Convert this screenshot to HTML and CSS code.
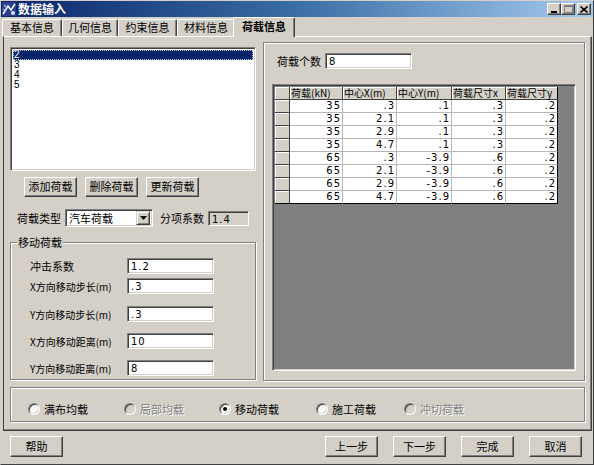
FILE: index.html
```html
<!DOCTYPE html>
<html lang="zh">
<head>
<meta charset="utf-8">
<title>数据输入</title>
<link rel="stylesheet" href="styles.css">
</head>
<body>
<div class="window">
  <div class="titlebar">
    <svg class="appicon" width="14" height="14" viewBox="0 0 14 14">
      <rect x="0" y="0" width="14" height="14" fill="#2a3f8f"/>
      <path d="M1 12 L6 4 L9 8 L13 2" stroke="#ffffff" stroke-width="1.5" fill="none"/>
      <path d="M2 3 L5 6 M1 7 L4 9" stroke="#9fc3ff" stroke-width="1.2"/>
      <circle cx="11" cy="11" r="2" fill="#d6e4ff"/>
    </svg>
    <span class="title">数据输入</span>
    <div class="tbtns">
      <span class="tbtn"><svg width="8" height="7" viewBox="0 0 8 7"><rect x="1" y="5" width="6" height="2" fill="#000"/></svg></span>
      <span class="tbtn"><svg width="9" height="8" viewBox="0 0 9 8"><rect x="0.5" y="0.5" width="8" height="7" fill="none" stroke="#808080"/><rect x="0" y="0" width="9" height="2" fill="#808080"/></svg></span>
      <span class="tbtn close"><svg width="8" height="7" viewBox="0 0 8 7"><path d="M0.5 0.5 L7.5 6.5 M7.5 0.5 L0.5 6.5" stroke="#000" stroke-width="1.6"/></svg></span>
    </div>
  </div>

  <div class="tabs">
    <div class="tab t1">基本信息</div>
    <div class="tab t2">几何信息</div>
    <div class="tab t3">约束信息</div>
    <div class="tab t4">材料信息</div>
    <div class="tab active">荷载信息</div>
  </div>

  <div class="panel">
    <div class="top">
      <div class="left">
        <div class="listbox">
          <div class="item sel">2</div>
          <div class="item">3</div>
          <div class="item">4</div>
          <div class="item">5</div>
        </div>
        <div class="btnrow">
          <div class="btn">添加荷载</div>
          <div class="btn">删除荷载</div>
          <div class="btn">更新荷载</div>
        </div>
        <div class="typerow">
          <span class="lbl-type">荷载类型</span>
          <div class="combo">
            <span class="combo-text">汽车荷载</span>
            <span class="dropbtn"><svg width="7" height="4" viewBox="0 0 7 4"><path d="M0 0 H7 L3.5 4 Z" fill="#000"/></svg></span>
          </div>
          <span class="lbl-coef">分项系数</span>
          <div class="field disabled coef">1.4</div>
        </div>
        <div class="gbox move">
          <span class="glegend">移动荷载</span>
          <div class="frow r1"><span class="flbl">冲击系数</span><div class="field fin">1.2</div></div>
          <div class="frow r2"><span class="flbl small">X方向移动步长(m)</span><div class="field fin">.3</div></div>
          <div class="frow r3"><span class="flbl small">Y方向移动步长(m)</span><div class="field fin">.3</div></div>
          <div class="frow r4"><span class="flbl small">X方向移动距离(m)</span><div class="field fin">10</div></div>
          <div class="frow r5"><span class="flbl small">Y方向移动距离(m)</span><div class="field fin">8</div></div>
        </div>
      </div>

      <div class="gbox right">
        <div class="countrow">
          <span class="lbl-count">荷载个数</span>
          <div class="field count">8</div>
        </div>
        <div class="grid">
          <table>
            <colgroup>
              <col class="c0"><col class="c1"><col class="c2"><col class="c3"><col class="c4"><col class="c5">
            </colgroup>
            <thead>
              <tr><th class="fix"></th><th>荷载(kN)</th><th>中心X(m)</th><th>中心Y(m)</th><th>荷载尺寸x</th><th class="lastc">荷载尺寸y</th></tr>
            </thead>
            <tbody>
              <tr><th class="fix"></th><td>35</td><td>.3</td><td>.1</td><td>.3</td><td class="lastc">.2</td></tr>
              <tr><th class="fix"></th><td>35</td><td>2.1</td><td>.1</td><td>.3</td><td class="lastc">.2</td></tr>
              <tr><th class="fix"></th><td>35</td><td>2.9</td><td>.1</td><td>.3</td><td class="lastc">.2</td></tr>
              <tr><th class="fix"></th><td>35</td><td>4.7</td><td>.1</td><td>.3</td><td class="lastc">.2</td></tr>
              <tr><th class="fix"></th><td>65</td><td>.3</td><td>-3.9</td><td>.6</td><td class="lastc">.2</td></tr>
              <tr><th class="fix"></th><td>65</td><td>2.1</td><td>-3.9</td><td>.6</td><td class="lastc">.2</td></tr>
              <tr><th class="fix"></th><td>65</td><td>2.9</td><td>-3.9</td><td>.6</td><td class="lastc">.2</td></tr>
              <tr class="lastr"><th class="fix"></th><td>65</td><td>4.7</td><td>-3.9</td><td>.6</td><td class="lastc">.2</td></tr>
            </tbody>
          </table>
        </div>
      </div>
    </div>

    <div class="gbox radios">
      <div class="ropt w1"><span class="radio"></span><span class="rtext">满布均载</span></div>
      <div class="ropt w2 dis"><span class="radio"></span><span class="rtext">局部均载</span></div>
      <div class="ropt w3"><span class="radio"><span class="dot"></span></span><span class="rtext">移动荷载</span></div>
      <div class="ropt w4"><span class="radio"></span><span class="rtext">施工荷载</span></div>
      <div class="ropt w5 dis"><span class="radio"></span><span class="rtext">冲切荷载</span></div>
    </div>
  </div>

  <div class="footer">
    <div class="btn fbtn">帮助</div>
    <div class="fright">
      <div class="btn fbtn">上一步</div>
      <div class="btn fbtn">下一步</div>
      <div class="btn fbtn">完成</div>
      <div class="btn fbtn">取消</div>
    </div>
  </div>
</div>
</body>
</html>
```

FILE: styles.css
```css
* { box-sizing: border-box; }

body {
  margin: 0;
  background: #d4d0c8;
  font-family: "Noto Sans CJK SC", "Liberation Sans", sans-serif;
  font-size: 11px;
  color: #000;
}

.window {
  width: 594px;
  height: 465px;
  background: #d4d0c8;
  border: 1px solid;
  border-color: #d4d0c8 #404040 #404040 #d4d0c8;
  display: flex;
  flex-direction: column;
  overflow: hidden;
}

/* title bar */
.titlebar {
  height: 16px;
  flex: none;
  display: flex;
  align-items: center;
  padding-left: 1px;
  background: linear-gradient(to right, #0a246a 0%, #3a6ea5 50%, #a6caf0 100%);
}
.appicon { flex: none; }
.title {
  margin-left: 2px;
  color: #fff;
  font-weight: bold;
  font-size: 12px;
  line-height: 14px;
}
.tbtns {
  margin-left: auto;
  display: flex;
  padding-right: 2px;
}
.tbtn {
  width: 14px;
  height: 12px;
  background: #d4d0c8;
  border: 1px solid;
  border-color: #fff #404040 #404040 #fff;
  box-shadow: inset -1px -1px #808080;
  display: flex;
  align-items: center;
  justify-content: center;
}
.tbtn.close { margin-left: 2px; }

/* tabs */
.tabs {
  height: 19px;
  flex: none;
  display: flex;
  align-items: flex-end;
  padding-left: 1px;
  position: relative;
  z-index: 1;
}
.tab {
  height: 17px;
  border: 1px solid;
  border-bottom: none;
  border-color: #fff #404040 transparent #fff;
  box-shadow: inset -1px 0 #808080;
  border-radius: 2px 2px 0 0;
  text-align: center;
  line-height: 15px;
  background: #d4d0c8;
}
.t1 { width: 60px; }
.t2 { width: 56px; }
.t3 { width: 59px; }
.t4 { width: 58px; }
.tab.active {
  width: 62px;
  height: 20px;
  margin-left: -2px;
  margin-bottom: -1px;
  font-weight: bold;
  line-height: 17px;
}

/* main panel */
.panel {
  height: 395px;
  flex: none;
  margin: 0 1px 0 2px;
  border: 1px solid;
  border-color: #fff #404040 #404040 #404040;
  box-shadow: inset -1px -1px #808080;
  padding: 5px 6px 0 6px;
  display: flex;
  flex-direction: column;
}
.top {
  display: flex;
  gap: 7px;
  height: 339px;
}
.left {
  width: 246px;
  flex: none;
  display: flex;
  flex-direction: column;
}

/* sunken elements */
.listbox, .field, .combo, .grid {
  border: 1px solid;
  border-color: #808080 #fff #fff #808080;
  box-shadow: inset 1px 1px #404040, inset -1px -1px #d4d0c8;
  background: #fff;
}

.listbox {
  margin-top: 5px;
  height: 124px;
  padding: 2px;
  font-family: "Liberation Sans", sans-serif;
  font-size: 10px;
}
.item {
  height: 10px;
  line-height: 10px;
  padding-left: 1px;
  overflow: hidden;
}
.item.sel {
  background: #0a246a;
  color: #fff;
  outline: 1px dotted #c8c8c8;
  outline-offset: -1px;
}

/* buttons */
.btn {
  width: 53px;
  height: 20px;
  border: 1px solid;
  border-color: #fff #404040 #404040 #fff;
  box-shadow: inset -1px -1px #808080;
  background: #d4d0c8;
  text-align: center;
  line-height: 17px;
}
.btnrow {
  margin-top: 6px;
  padding-left: 14px;
  display: flex;
  gap: 8px;
}

/* load type row */
.typerow {
  margin-top: 12px;
  height: 18px;
  display: flex;
  align-items: center;
}
.lbl-type {
  width: 55px;
  padding-left: 7px;
  flex: none;
}
.combo {
  width: 88px;
  height: 18px;
  flex: none;
  display: flex;
  align-items: center;
  padding: 2px;
}
.combo-text { padding-left: 1px; line-height: 13px; }
.dropbtn {
  margin-left: auto;
  width: 14px;
  height: 14px;
  background: #d4d0c8;
  border: 1px solid;
  border-color: #d4d0c8 #404040 #404040 #d4d0c8;
  box-shadow: inset 1px 1px #fff, inset -1px -1px #808080;
  display: flex;
  align-items: center;
  justify-content: center;
}
.lbl-coef {
  width: 48px;
  margin-left: 7px;
  flex: none;
}
.field {
  height: 16px;
  padding: 0 3px;
  line-height: 15px;
  letter-spacing: 1px;
  font-family: "DejaVu Sans", sans-serif;
  font-size: 10px;
}
.field.disabled { background: #d4d0c8; }
.coef { width: 41px; height: 15px; }

/* group boxes */
.gbox {
  position: relative;
  border: 1px solid #808080;
  box-shadow: inset 1px 1px #fff, 1px 1px #fff;
}
.glegend {
  position: absolute;
  top: -7px;
  left: 6px;
  padding: 0 1px;
  background: #d4d0c8;
  line-height: 12px;
}
.move {
  margin-top: 15px;
  height: 138px;
  padding: 15px 0 0 19px;
}
.frow {
  display: flex;
  align-items: center;
  height: 16px;
}
.r2 { margin-top: 4px; }
.r3 { margin-top: 12px; }
.r4 { margin-top: 11px; }
.r5 { margin-top: 11px; }
.flbl { width: 97px; flex: none; }
.flbl.small { font-size: 10px; }
.fin { width: 87px; }

/* right group */
.right {
  flex: 1;
  padding: 10px 0 0 8px;
}
.countrow {
  display: flex;
  align-items: center;
  height: 16px;
  padding-left: 5px;
}
.lbl-count { width: 48px; flex: none; }
.count { width: 87px; }

.grid {
  margin-top: 15px;
  width: 304px;
  height: 287px;
  background: #808080;
  padding: 2px 0 0 2px;
  overflow: hidden;
}
.grid table {
  border-collapse: separate;
  border-spacing: 0;
  table-layout: fixed;
  width: 283px;
}
.c0 { width: 15px; }
.c1 { width: 53px; }
.c2 { width: 54px; }
.c3 { width: 55px; }
.c4 { width: 54px; }
.c5 { width: 52px; }
.grid th, .grid td {
  height: 13px;
  padding: 0 1px;
  line-height: 12px;
  white-space: nowrap;
}
.grid th {
  background: #d4d0c8;
  font-weight: normal;
  text-align: left;
  font-size: 10px;
  border-right: 1px solid #404040;
  border-bottom: 1px solid #404040;
  box-shadow: inset 1px 1px #fff;
}
.grid td {
  background: #fff;
  text-align: right;
  font-family: "DejaVu Sans", sans-serif;
  font-size: 10px;
  letter-spacing: 1px;
  padding-right: 1px;
  border-right: 1px solid #b8b8b8;
  border-bottom: 1px solid #b8b8b8;
}
.grid td.lastc, .grid th.lastc { border-right: 1px solid #000; }
.grid tr.lastr td, .grid tr.lastr th { border-bottom: 1px solid #000; }

/* radio frame */
.radios {
  margin-top: 6px;
  height: 35px;
  display: flex;
  align-items: center;
  padding: 8px 0 0 17px;
}
.ropt {
  display: flex;
  align-items: center;
  flex: none;
}
.w1 { width: 96px; }
.w2 { width: 95px; }
.w3 { width: 97px; }
.w4 { width: 88px; }
.radio {
  width: 12px;
  height: 12px;
  border-radius: 50%;
  border: 1px solid;
  border-color: #808080 #fff #fff #808080;
  box-shadow: inset 1px 1px #404040, inset -1px -1px #d4d0c8;
  background: #fff;
  display: flex;
  align-items: center;
  justify-content: center;
  flex: none;
}
.dot {
  width: 4px;
  height: 4px;
  border-radius: 50%;
  background: #000;
}
.rtext { margin-left: 4px; }
.ropt.dis .radio { background: #d4d0c8; }
.ropt.dis .rtext { color: #808080; text-shadow: 1px 1px #fff; }

/* footer */
.footer {
  flex: none;
  display: flex;
  padding: 5px 11px 0 9px;
}
.fbtn { height: 21px; line-height: 18px; }
.fright {
  margin-left: auto;
  display: flex;
  gap: 15px;
}
```
